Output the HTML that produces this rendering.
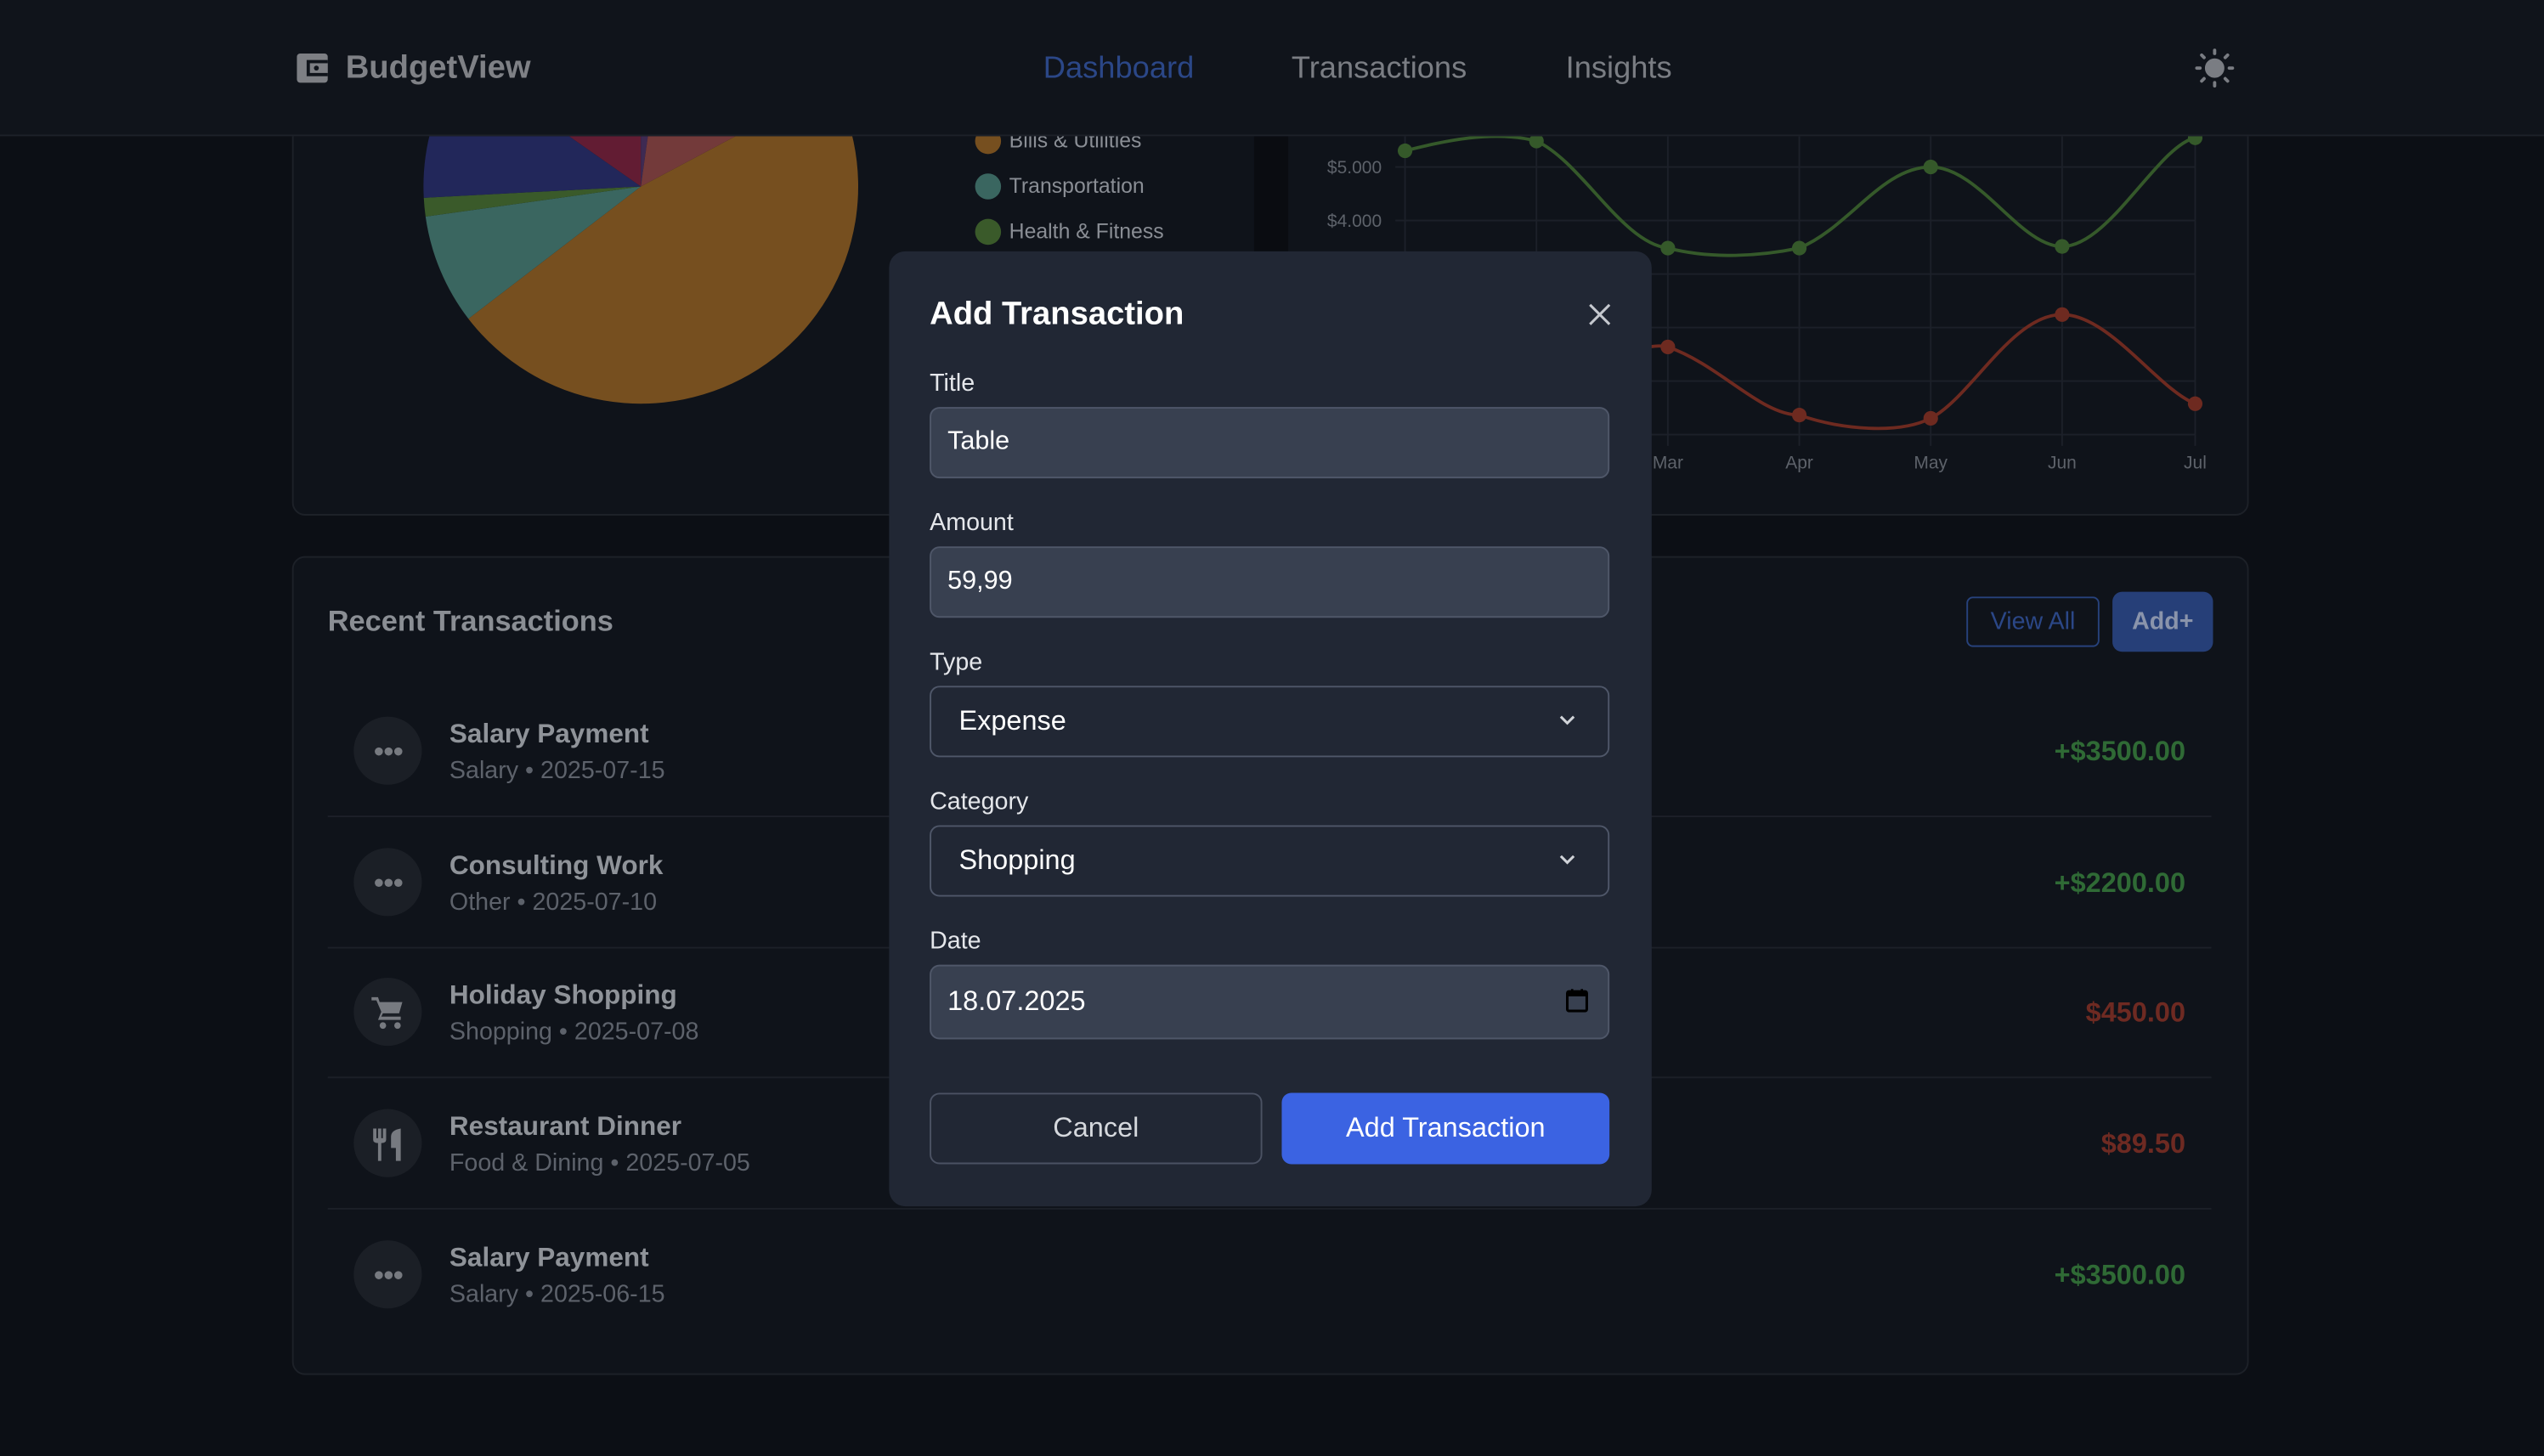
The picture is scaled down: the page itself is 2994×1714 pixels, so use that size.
<!DOCTYPE html>
<html><head><meta charset="utf-8"><style>
*{box-sizing:border-box;margin:0;padding:0}
html,body{width:2994px;height:1714px;overflow:hidden;background:#0c0f15}
#w{position:absolute;left:0;top:0;width:1568px;height:898px;transform:scale(1.90944,1.90869);transform-origin:0 0;font-family:"Liberation Sans",sans-serif;background:#0c0f15}
.a{position:absolute}
.card{position:absolute;background:#0f131a;border:1px solid #1d2128;border-radius:8px}
.row .t{position:absolute;left:277px;font-size:16.5px;font-weight:bold;color:#8f9399}
.row .s{position:absolute;left:277px;font-size:15px;color:#5d626b}
.ic{position:absolute;left:218px;width:42px;height:42px;border-radius:50%;background:#1b1f26}
.dots{position:absolute;left:229px;width:20px;height:6px}
.dots i{position:absolute;top:0;width:5px;height:5px;border-radius:50%;background:#777a80}
.amt{position:absolute;right:221px;font-size:17px;font-weight:bold}
.sep{position:absolute;left:202px;width:1161px;height:1px;background:#1c2028}
.lbl{position:absolute;left:573px;font-size:15px;color:#e5e7eb}
.inp{position:absolute;left:573px;width:419px;height:44px;background:#384050;border:1px solid #4f5769;border-radius:6px;color:#fff;font-size:16px;padding-left:10px;line-height:42px}
</style></head><body><div id="w">
<div class="card" style="left:180px;top:40px;width:1206px;height:278px;overflow:hidden">
<div class="a" style="left:592px;top:0;width:21px;height:278px;background:#0a0c11"></div>
</div>
<svg class="a" style="left:0;top:0" width="1568" height="330">
<g>
<path d="M395,115 L513.3,52.1 A134,134 0 0 1 288.7,196.6Z" fill="#764f1f"/>
<path d="M395,115 L288.7,196.6 A134,134 0 0 1 262.3,133.6Z" fill="#3a6660"/>
<path d="M395,115 L262.3,133.6 A134,134 0 0 1 261.2,122Z" fill="#3a5a2a"/>
<path d="M395,115 L261.2,122 A134,134 0 0 1 285.2,38.1Z" fill="#22275a"/>
<path d="M395,115 L285.2,38.1 A134,134 0 0 1 395,-19Z" fill="#621c33"/>
<path d="M395,115 L395,-19 A134,134 0 0 1 413.6,-17.7Z" fill="#3e2a52"/>
<path d="M395,115 L413.6,-17.7 A134,134 0 0 1 513.3,52.1Z" fill="#733a3a"/>
</g>
<circle cx="609" cy="87" r="8" fill="#764f1f"/><text x="622" y="91" font-size="13" fill="#8a8e95">Bills &amp; Utilities</text>
<circle cx="609" cy="115" r="8" fill="#3a6660"/><text x="622" y="119" font-size="13" fill="#8a8e95">Transportation</text>
<circle cx="609" cy="143" r="8" fill="#3a5a2a"/><text x="622" y="147" font-size="13" fill="#8a8e95">Health &amp; Fitness</text>
<g stroke="#1c2029" stroke-width="1">
<line x1="866" y1="84" x2="866" y2="275"/><line x1="947" y1="84" x2="947" y2="275"/><line x1="1028" y1="84" x2="1028" y2="275"/><line x1="1109" y1="84" x2="1109" y2="275"/><line x1="1190" y1="84" x2="1190" y2="275"/><line x1="1271" y1="84" x2="1271" y2="275"/><line x1="1353" y1="84" x2="1353" y2="275"/>
<line x1="860" y1="103" x2="1353" y2="103"/><line x1="860" y1="136" x2="1353" y2="136"/><line x1="860" y1="169" x2="1353" y2="169"/><line x1="860" y1="202" x2="1353" y2="202"/><line x1="860" y1="235" x2="1353" y2="235"/><line x1="860" y1="268" x2="1353" y2="268"/>
</g>
<text x="818" y="107" font-size="11" fill="#5d626a">$5.000</text>
<text x="818" y="140" font-size="11" fill="#5d626a">$4.000</text>
<g font-size="11" fill="#5d626a" text-anchor="middle"><text x="1028" y="289">Mar</text><text x="1109" y="289">Apr</text><text x="1190" y="289">May</text><text x="1271" y="289">Jun</text><text x="1353" y="289">Jul</text></g>
<path d="M866,93 C890,87 920,80 947,87 C975,100 1000,150 1028,153 C1055,160 1085,158 1109,153 C1140,140 1160,103 1190,103 C1220,103 1245,152 1271,152 C1300,152 1330,90 1353,85" fill="none" stroke="#35592a" stroke-width="2"/>
<g fill="#35592a"><circle cx="866" cy="93" r="4.5"/><circle cx="947" cy="87" r="4.5"/><circle cx="1028" cy="153" r="4.5"/><circle cx="1109" cy="153" r="4.5"/><circle cx="1190" cy="103" r="4.5"/><circle cx="1271" cy="152" r="4.5"/><circle cx="1353" cy="85" r="4.5"/></g>
<path d="M1000,220 C1010,215 1020,212 1028,214 C1060,225 1085,256 1109,256 C1135,265 1170,268 1190,258 C1215,245 1240,194 1271,194 C1300,194 1330,240 1353,249" fill="none" stroke="#6e2a20" stroke-width="2"/>
<g fill="#6e2a20"><circle cx="1028" cy="214" r="4.5"/><circle cx="1109" cy="256" r="4.5"/><circle cx="1190" cy="258" r="4.5"/><circle cx="1271" cy="194" r="4.5"/><circle cx="1353" cy="249" r="4.5"/></g>
</svg>
<div class="a" style="left:0;top:0;width:1568px;height:84px;background:#10141b;border-bottom:1px solid #1d2129"></div>
<svg class="a" style="left:182px;top:32px" width="22" height="20"><rect x="1" y="1" width="19" height="18" rx="2" fill="#7d7f84"/><rect x="7" y="5" width="13" height="10" fill="#10141b"/><rect x="9" y="7" width="11" height="6" fill="#7d7f84"/><circle cx="13" cy="10" r="1.5" fill="#10141b"/></svg>
<div class="a" style="left:213px;top:31px;font-size:20px;font-weight:bold;color:#7f8186">BudgetView</div>
<div class="a" style="left:643px;top:32px;font-size:19px;color:#2b4787">Dashboard</div>
<div class="a" style="left:796px;top:32px;font-size:19px;color:#7a7d83">Transactions</div>
<div class="a" style="left:965px;top:32px;font-size:19px;color:#7a7d83">Insights</div>
<svg class="a" style="left:1352px;top:29px" width="26" height="26" stroke="#7a7d83" stroke-width="2" stroke-linecap="round"><circle cx="13" cy="13" r="5" fill="#7a7d83"/><line x1="13" y1="2" x2="13" y2="4"/><line x1="13" y1="22" x2="13" y2="24"/><line x1="2" y1="13" x2="4" y2="13"/><line x1="22" y1="13" x2="24" y2="13"/><line x1="5" y1="5" x2="6.5" y2="6.5"/><line x1="19.5" y1="19.5" x2="21" y2="21"/><line x1="5" y1="21" x2="6.5" y2="19.5"/><line x1="19.5" y1="6.5" x2="21" y2="5"/></svg>
<div class="card" style="left:180px;top:343px;width:1206px;height:505px"></div>
<div class="a" style="left:202px;top:373px;font-size:18px;font-weight:bold;color:#8a8e94">Recent Transactions</div>
<div class="a" style="left:1212px;top:368px;width:82px;height:31px;border:1px solid #27427c;border-radius:4px;color:#2b4787;font-size:15px;text-align:center;line-height:29px">View All</div>
<div class="a" style="left:1302px;top:365px;width:62px;height:37px;background:#263f78;border-radius:6px;color:#8a94ab;font-size:15px;font-weight:bold;text-align:center;line-height:37px">Add+</div>
<div class="row">
<div class="ic" style="top:442px"></div><div class="dots" style="top:461px"><i style="left:2px"></i><i style="left:8px"></i><i style="left:14px"></i></div>
<div class="t" style="top:444px">Salary Payment</div><div class="s" style="top:467px">Salary • 2025-07-15</div>
<div class="amt" style="top:454px;color:#2f6a35">+$3500.00</div>
<div class="sep" style="top:503px"></div>
<div class="ic" style="top:523px"></div><div class="dots" style="top:542px"><i style="left:2px"></i><i style="left:8px"></i><i style="left:14px"></i></div>
<div class="t" style="top:525px">Consulting Work</div><div class="s" style="top:548px">Other • 2025-07-10</div>
<div class="amt" style="top:535px;color:#2f6a35">+$2200.00</div>
<div class="sep" style="top:584px"></div>
<div class="ic" style="top:603px"></div>
<svg class="a" style="left:228px;top:614px" width="22" height="22" fill="#777a80"><path d="M1,1 H5 L6,4 H20 L18,11 H8 L7,13 H19 V15 H5 L7,10 L4,3 H1Z"/><circle cx="8" cy="18.5" r="2"/><circle cx="17" cy="18.5" r="2"/></svg>
<div class="t" style="top:605px">Holiday Shopping</div><div class="s" style="top:628px">Shopping • 2025-07-08</div>
<div class="amt" style="top:615px;color:#6e2a22">$450.00</div>
<div class="sep" style="top:664px"></div>
<div class="ic" style="top:684px"></div>
<svg class="a" style="left:228px;top:695px" width="22" height="22" fill="#777a80"><path d="M2,1 H4 V7 H5 V1 H7 V7 H8 V1 H10 V8 Q10,10 7,10 V21 H5 V10 Q2,10 2,8Z"/><path d="M19,1 V21 H16 V13 H13 V6 Q13,2 19,1Z"/></svg>
<div class="t" style="top:686px">Restaurant Dinner</div><div class="s" style="top:709px">Food &amp; Dining • 2025-07-05</div>
<div class="amt" style="top:696px;color:#6e2a22">$89.50</div>
<div class="sep" style="top:745px"></div>
<div class="ic" style="top:765px"></div><div class="dots" style="top:784px"><i style="left:2px"></i><i style="left:8px"></i><i style="left:14px"></i></div>
<div class="t" style="top:767px">Salary Payment</div><div class="s" style="top:790px">Salary • 2025-06-15</div>
<div class="amt" style="top:777px;color:#2f6a35">+$3500.00</div>
</div>
<div class="a" style="left:548px;top:155px;width:470px;height:589px;background:#212734;border-radius:10px"></div>
<div class="a" style="left:573px;top:183px;font-size:20px;font-weight:bold;color:#fff">Add Transaction</div>
<svg class="a" style="left:979px;top:187px" width="14" height="14" stroke="#c5c8ce" stroke-width="1.6"><line x1="1" y1="1" x2="13" y2="13"/><line x1="13" y1="1" x2="1" y2="13"/></svg>
<div class="lbl" style="top:228px">Title</div><div class="inp" style="top:251px">Table</div>
<div class="lbl" style="top:314px">Amount</div><div class="inp" style="top:337px">59,99</div>
<div class="lbl" style="top:400px">Type</div><div class="inp" style="top:423px;background:#212734;padding-left:17px;font-size:17px">Expense</div>
<div class="lbl" style="top:486px">Category</div><div class="inp" style="top:509px;background:#212734;padding-left:17px;font-size:17px">Shopping</div>
<svg class="a" style="left:960px;top:439px" width="12" height="10" stroke="#d0d3d8" stroke-width="1.6" fill="none"><path d="M2,3 L6,7 L10,3"/></svg>
<svg class="a" style="left:960px;top:525px" width="12" height="10" stroke="#d0d3d8" stroke-width="1.6" fill="none"><path d="M2,3 L6,7 L10,3"/></svg>
<div class="lbl" style="top:572px">Date</div><div class="inp" style="top:595px;height:46px;line-height:44px;font-size:17px">18.07.2025</div>
<svg class="a" style="left:965px;top:609px" width="14" height="16"><rect x="1" y="2.5" width="12" height="12" rx="1" fill="none" stroke="#000" stroke-width="1.6"/><rect x="1" y="2.5" width="12" height="3" fill="#000"/><line x1="4" y1="1" x2="4" y2="3" stroke="#000" stroke-width="1.4"/><line x1="10" y1="1" x2="10" y2="3" stroke="#000" stroke-width="1.4"/></svg>
<div class="a" style="left:573px;top:674px;width:205px;height:44px;border:1px solid #4b5263;border-radius:6px;color:#d5d8dd;font-size:17px;text-align:center;line-height:42px">Cancel</div>
<div class="a" style="left:790px;top:674px;width:202px;height:44px;background:#3b63e2;border-radius:6px;color:#fff;font-size:17px;text-align:center;line-height:44px">Add Transaction</div>
</div></body></html>
